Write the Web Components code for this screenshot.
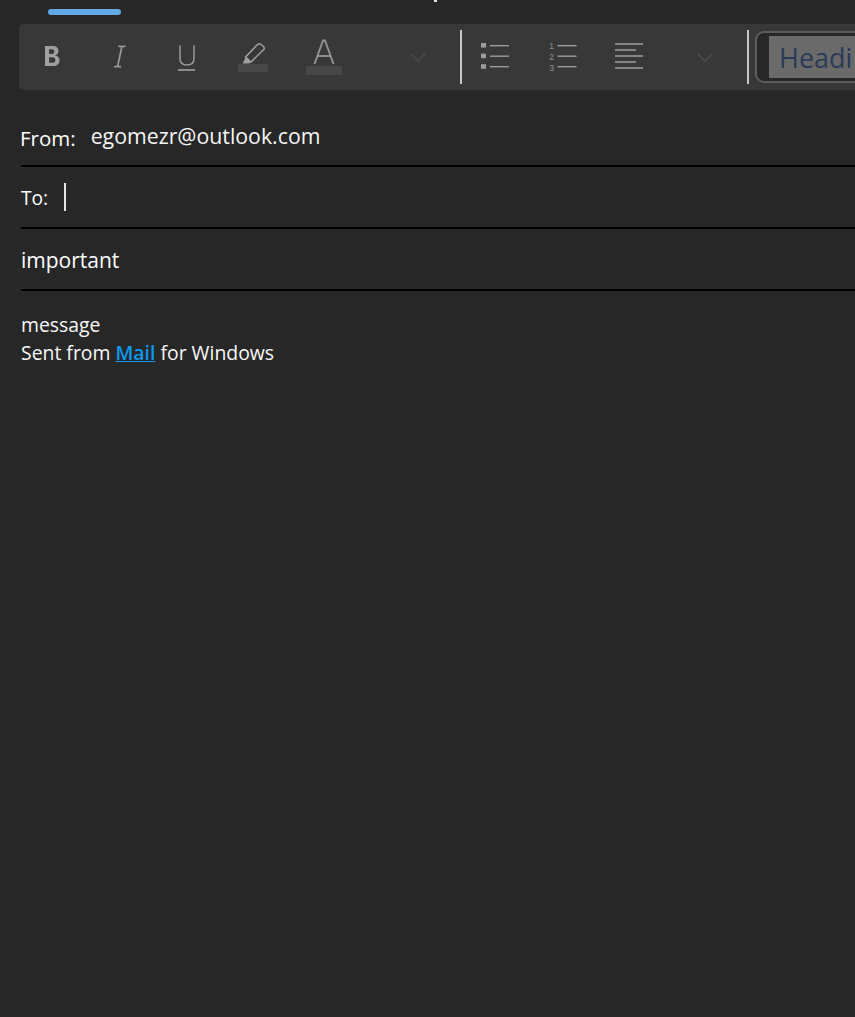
<!DOCTYPE html>
<html>
<head>
<meta charset="utf-8">
<title>Mail</title>
<style>
html,body{margin:0;padding:0;background:#272727;height:100%;overflow:hidden;}
body{font-family:"Open Sans","Noto Sans",sans-serif;color:#fff;}
</style>
</head>
<body>
<mail-compose>
  <format-toolbar></format-toolbar>
  <header-field label="From:" value="egomezr@outlook.com" kind="from"></header-field>
  <header-field label="To:" kind="to"></header-field>
  <header-field value="important" kind="subject"></header-field>
  <message-body>
    <div>message</div>
    <div>Sent from <a href="#">Mail</a> for Windows</div>
  </message-body>
</mail-compose>
<script>
const composeTemplate = document.createElement("template");
composeTemplate.innerHTML = `
<style>
:host{display:block;width:855px;height:1017px;overflow:hidden;position:relative;}
.tab{width:73px;height:6px;margin-left:48px;border-radius:3px;background:#63a9e6;}
.top{padding-top:9px;height:15px;box-sizing:border-box;}
.tick{position:absolute;left:434px;top:0;width:3px;height:2px;background:#e8e8e8;}
</style>
<div class="tick"></div>
<div class="top"><div class="tab"></div></div>
<slot></slot>
`;
class MailCompose extends HTMLElement{
    constructor(){
        super();
        this.attachShadow({mode:"open"});
        this.shadowRoot.appendChild(composeTemplate.content.cloneNode(true));
    }
}
customElements.define("mail-compose", MailCompose);

const toolbarTemplate = document.createElement("template");
toolbarTemplate.innerHTML = `
<style>
:host{display:flex;align-items:stretch;height:66px;margin:9px 0 0 19px;background:#383838;border-radius:5px 0 0 5px;overflow:hidden;}
.btn{width:67px;flex:none;display:flex;align-items:center;justify-content:center;}
.btn.wide{width:74px;}
.btn.more{width:66px;margin:0 9px 0 24px;}
.btn.more.two{margin-left:9px;}
.sep{width:2px;flex:none;height:54px;margin-top:6px;background:#c6c6c6;}
svg{display:block;overflow:visible;}
.style{flex:none;box-sizing:border-box;width:140px;height:52px;margin:7px 0 0 6px;border:2px solid #5c5c5c;border-radius:9px;background:#272727;padding:3px 0 0 12px;}
.style span{display:block;height:42px;line-height:43px;background:#6a6a6a;padding-left:10px;color:#2a3b58;font-size:27px;}
</style>
<div class="btn"><svg width="20" height="22" viewBox="0 0 20 22"><path d="M2 0h7.500c3.800 0 6 1.700 6 4.900 0 2.300-1.300 3.800-3.400 4.300v.2c2.700.3 4.400 2.200 4.400 4.800 0 3.700-2.600 5.800-6.500 5.800H2zM6.100 3.300v4.800h2.500c1.800 0 2.800-.9 2.800-2.500s-1-2.300-2.900-2.300zM6.100 11.200v5.600h3c2.100 0 3.300-1 3.300-2.900 0-1.800-1.200-2.700-3.400-2.700z" fill="#a0a0a0" fill-rule="evenodd"/></svg></div>
<div class="btn"><svg width="14" height="24" viewBox="0 0 14 24" fill="none" stroke="#9a9a9a" stroke-width="1.700"><path d="M5.500 1.200c2 .4 5 .4 7 0M1 21.800c2-.4 5-.4 7 0M9 1.200 4.500 21.800"/></svg></div>
<div class="btn"><svg width="20" height="26" viewBox="0 0 20 26" fill="none" stroke="#9a9a9a" stroke-width="1.500"><path d="M3 1.500v13c0 4 2.500 6.500 7 6.500s7-2.500 7-6.500v-13"/><path d="M1 26h17" stroke="#a8a8a8"/></svg></div>
<div class="btn"><svg width="30" height="30" viewBox="0 0 30 30" style="margin-left:-1px;margin-top:-2px"><path d="M7.500 16 19.500 3.500c1-1 2.500-1 3.500 0l2.500 2c1 1 1 2.300 0 3.300L13 21z" fill="none" stroke="#a0a0a0" stroke-width="1.500"/><path d="M8 16l5 5-2 1.500H4.500z" fill="#a0a0a0"/><rect y="23" width="30" height="8" fill="#484848"/></svg></div>
<div class="btn wide"><svg width="36" height="36" viewBox="0 0 36 36"><path d="M8.500 25 17 1.500h2l8.500 23.500M11.500 17h13" fill="none" stroke="#8f8f8f" stroke-width="2"/><rect y="27" width="36" height="9" fill="#484848"/></svg></div>
<div class="btn more"><svg width="16" height="9" viewBox="0 0 16 9" fill="none" stroke="#4c4c4c" stroke-width="1.500"><path d="M.5.500 8 8l7.500-7.500"/></svg></div>
<div class="sep"></div>
<div class="btn"><svg width="28" height="24" viewBox="0 0 28 24" fill="#9c9c9c"><rect x="-1" y="-2" width="5" height="4.600"/><rect x="-1" y="8.600" width="5" height="4.600"/><rect x="-1" y="19.200" width="5" height="4.600"/><rect x="8" y="0" width="19" height="1.400"/><rect x="8" y="10.500" width="19" height="1.400"/><rect x="8" y="21" width="19" height="1.400"/></svg></div>
<div class="btn"><svg width="28" height="26" viewBox="0 0 28 26" fill="#9c9c9c"><text x="0" y="5" font-family="Liberation Sans" font-size="9.200" fill="#8c8c8c">1</text><text x="0" y="16" font-family="Liberation Sans" font-size="9.200" fill="#8c8c8c">2</text><text x="0" y="26.700" font-family="Liberation Sans" font-size="9.200" fill="#8c8c8c">3</text><rect x="8.500" y="1" width="19" height="1.400"/><rect x="8.500" y="11.500" width="19" height="1.400"/><rect x="8.500" y="22" width="19" height="1.400"/></svg></div>
<div class="btn"><svg width="28" height="26" viewBox="0 0 28 26" fill="#a4a4a4"><rect x="-1" y="-.7" width="28" height="1.400"/><rect x="-1" y="5.300" width="21" height="1.400"/><rect x="-1" y="11.300" width="28" height="1.400"/><rect x="-1" y="17.300" width="21" height="1.400"/><rect x="-1" y="23.300" width="28" height="1.400"/></svg></div>
<div class="btn more two"><svg width="16" height="9" viewBox="0 0 16 9" fill="none" stroke="#4c4c4c" stroke-width="1.500"><path d="M.5.500 8 8l7.500-7.500"/></svg></div>
<div class="sep"></div>
<div class="style"><span>Headi</span></div>
`;
class FormatToolbar extends HTMLElement{
    constructor(){
        super();
        this.attachShadow({mode:"open"});
        this.shadowRoot.appendChild(toolbarTemplate.content.cloneNode(true));
    }
}
customElements.define("format-toolbar", FormatToolbar);

const fieldTemplate = document.createElement("template");
fieldTemplate.innerHTML = `
<style>
:host{display:flex;align-items:center;box-sizing:border-box;height:62px;margin-left:21px;border-bottom:2px solid #000;color:#fff;}
.label{font-size:20.500px;white-space:nowrap;}
.value{font-size:21px;white-space:nowrap;}
.caret{width:2px;height:28px;background:#e6e6e6;margin-left:16px;}
:host([kind="from"]){height:77px;padding-top:17px;}
:host([kind="from"]) .label{margin:4px 0 0 -1px;}
:host([kind="from"]) .value{font-size:21.300px;margin:-1px 0 0 15px;color:#f6f6f6;}
:host([kind="subject"]){padding-top:2px;}
:host([kind="to"]) .label{font-size:19.200px;}
</style>
<span class="label"></span><span class="value"></span>
`;
class HeaderField extends HTMLElement{
    constructor(){
        super();
        this.attachShadow({mode:"open"});
        this.shadowRoot.appendChild(fieldTemplate.content.cloneNode(true));
    }
    connectedCallback(){
        this.render();
    }
    render(){
        const label = this.shadowRoot.querySelector(".label");
        const value = this.shadowRoot.querySelector(".value");
        label.textContent = this.getAttribute("label") || "";
        value.textContent = this.getAttribute("value") || "";
        if(!label.textContent) label.remove();
        if(!value.textContent) value.remove();
        if(this.getAttribute("kind") === "to"){
            const caret = document.createElement("div");
            caret.className = "caret";
            this.shadowRoot.appendChild(caret);
        }
    }
}
customElements.define("header-field", HeaderField);

const bodyTemplate = document.createElement("template");
bodyTemplate.innerHTML = `
<style>
:host{display:block;padding:20px 0 0 21px;font-size:19.400px;line-height:28px;color:#f8f8f8;}
::slotted(div){display:block;}
</style>
<slot></slot>
`;
class MessageBody extends HTMLElement{
    constructor(){
        super();
        this.attachShadow({mode:"open"});
        this.shadowRoot.appendChild(bodyTemplate.content.cloneNode(true));
    }
}
customElements.define("message-body", MessageBody);
</script>
<style>
message-body a{color:#0a9aef;text-decoration:underline;font-weight:600;}
</style>
</body>
</html>
